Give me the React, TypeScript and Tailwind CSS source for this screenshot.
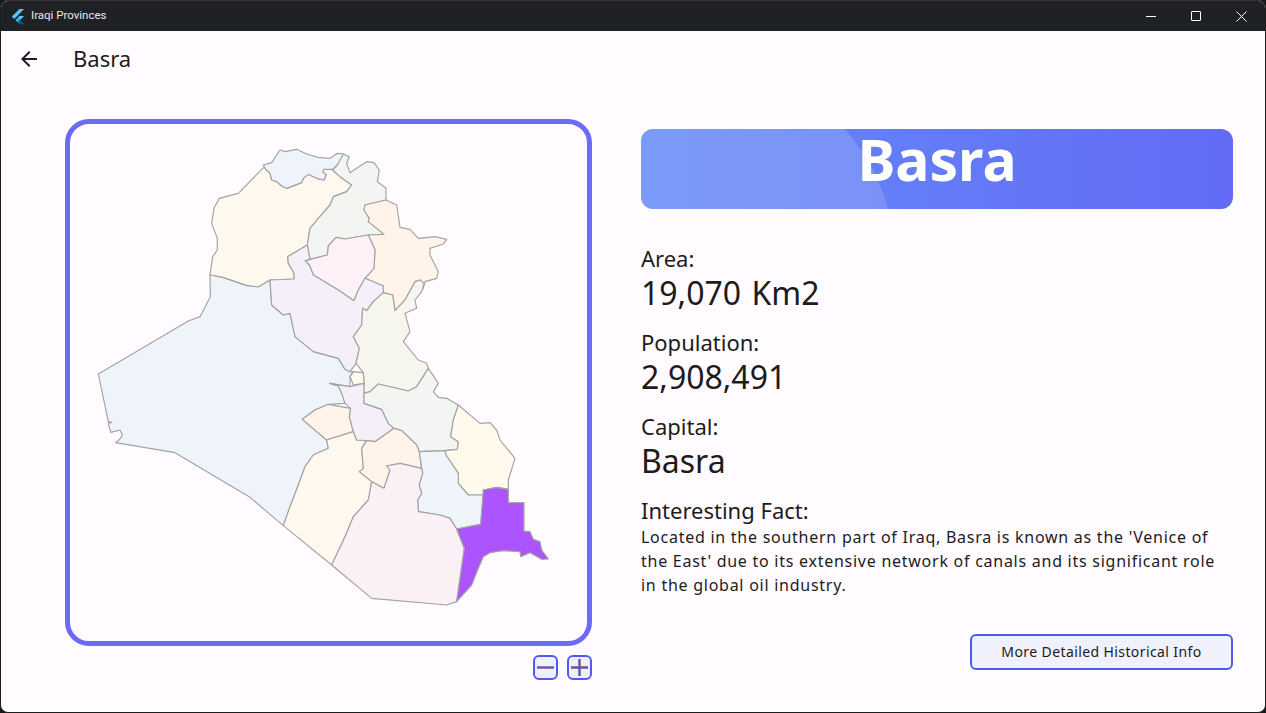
const provincesNorth = [
  // Nineveh
  { fill: "#fff8ee", points: "40,83 -35,160 -92,175 -108,205 -115,250 -98,295 -98,330 -112,350 -120,405 -80,413 -10,437 25,441 60,420 132,417 132,400 115,370 113,350 172,315 180,265 205,235 240,195 250,170 290,155 305,135 270,110 245,88 222,88 218,95 228,105 222,120 200,115 175,103 160,115 155,128 110,145 95,138 80,125 65,120 60,100 45,85" },
  // Anbar
  { fill: "#eff4fb", points: "-120,405 -119,470 -150,530 -185,543 -455,702 -425,845 -415,847 -425,850 -418,877 -390,870 -383,885 -390,897 -403,908 -225,938 0,1072 100,1157 120,1100 145,1035 165,980 190,945 235,925 230,900 157,838 195,810 235,793 285,790 275,760 265,738 240,730 300,740 300,710 310,695 300,695 285,688 265,655 190,635 135,590 120,520 100,525 65,495 60,420 25,441 -10,437 -80,413" },
  // Duhok
  { fill: "#eff4fb", points: "40,75 65,68 90,30 105,35 140,28 170,42 205,52 240,55 262,40 280,42 278,55 262,75 248,88 222,88 218,95 228,105 222,120 200,115 175,103 160,115 155,128 110,145 95,138 80,125 65,120 60,100 45,85" },
  // Erbil
  { fill: "#f2f5f2", points: "248,90 262,75 280,42 298,50 290,70 300,98 320,85 350,65 372,68 388,90 382,125 408,145 408,180 345,195 342,210 358,235 355,245 380,265 402,283 355,285 285,297 258,292 235,318 232,345 180,358 172,315 180,265 205,235 240,195 250,170 290,155 305,135 270,110" },
  // Sulaymaniyah
  { fill: "#fff3ea", points: "408,180 440,195 450,262 480,268 505,295 555,290 590,298 580,312 540,325 540,345 565,395 560,415 525,425 520,445 510,420 495,425 465,480 435,512 428,465 400,458 400,438 345,415 372,385 375,330 355,285 402,283 380,265 355,245 358,235 342,210 345,195" },
  // Kirkuk
  { fill: "#fdf0f7", points: "258,292 285,297 355,285 375,330 372,385 345,415 325,450 312,482 265,450 190,405 178,375 165,362 180,358 232,345 235,318" },
  // Salah ad Din
  { fill: "#f4eff8", points: "172,315 180,358 165,362 178,375 190,405 265,450 312,482 325,450 345,415 400,438 400,458 370,485 350,512 338,505 335,555 310,590 328,625 318,670 300,695 285,688 265,655 190,635 135,590 120,520 100,525 65,495 60,420 132,417 132,400 115,370 113,350" },
  // Diyala
  { fill: "#f6f6ef", points: "400,458 428,465 435,512 465,480 495,425 510,420 522,430 515,455 495,480 500,505 465,520 480,575 460,605 505,660 530,670 535,685 500,740 475,753 385,732 360,755 342,760 342,730 340,698 318,670 328,625 310,590 335,555 338,505 350,512 370,485" },
];

const provincesSouth = [
  // Baghdad
  { fill: "#fff8ee", points: "240,50 250,35 280,38 282,70 250,75" },
  // Karbala
  { fill: "#fff3ea", points: "97,178 135,150 175,133 242,145 238,170 250,215 170,240" },
  // Najaf
  { fill: "#fff8ee", points: "170,240 250,215 260,240 290,242 275,265 280,325 268,335 305,365 295,420 250,470 225,530 185,615 40,497 60,440 85,375 105,320 130,285 175,265" },
  // Babil
  { fill: "#f4eff8", points: "180,70 240,80 282,70 282,100 282,130 335,148 355,190 372,205 315,245 290,242 260,240 250,215 238,170 242,145 225,130 215,100 205,78" },
  // Wasit
  { fill: "#f2f5f2", points: "282,100 300,95 325,72 415,93 440,80 475,25 505,70 490,95 505,112 530,115 565,135 550,180 542,230 565,245 562,268 525,272 448,275 440,255 395,212 372,205 355,190 335,148 282,130" },
  // Maysan
  { fill: "#fffaeb", points: "565,135 630,190 660,188 680,210 690,240 735,295 715,360 715,388 680,382 640,390 640,405 595,405 565,370 565,340 528,285 525,272 562,268 565,245 542,230 550,180" },
  // Qadisiyah
  { fill: "#fff3ea", points: "372,205 395,212 440,255 448,275 455,325 390,310 350,318 360,330 342,385 305,365 268,335 280,325 275,265 290,242 315,245" },
  // Dhi Qar
  { fill: "#eff4fb", points: "448,275 525,272 528,285 565,340 565,370 595,405 640,405 632,493 560,507 540,475 510,465 445,455 443,420 455,400 447,375 458,340 455,325" },
  // Muthanna
  { fill: "#fcf0f7", points: "305,365 342,385 360,330 350,318 390,310 455,325 458,340 447,375 455,400 443,420 445,455 510,465 540,475 560,507 583,565 560,725 530,735 305,715 185,615 225,530 250,470 295,420" },
  // Basra
  { fill: "#ab54ff", points: "640,390 680,382 715,388 715,428 762,428 762,513 780,515 790,538 810,545 815,570 835,597 815,598 780,578 752,590 750,575 700,572 660,578 640,590 625,625 605,675 560,725 583,565 560,507 632,493" },
];

const stats = [
  { label: "Area:", value: "19,070 Km2" },
  { label: "Population:", value: "2,908,491" },
  { label: "Capital:", value: "Basra" },
];

const TitleBar = () => (
  <div className="flex h-[30px] shrink-0 items-center bg-[#202124] text-white">
    <svg viewBox="0 0 166 200" className="ml-[10px] h-[17px] w-[14px]">
      <path d="M37.7 128.9L9.8 101 100.4 10.4h55.5z" fill="#54c5f8" />
      <path d="M156 93.6h-55.6L79.6 114.4l27.8 27.8z" fill="#54c5f8" />
      <path d="M79.6 170l20.8 20.8H156l-48.6-48.6z" fill="#01579b" />
      <path d="M79.6 114.4L51.8 142.2 79.6 170l27.8-27.8z" fill="#29b6f6" />
    </svg>
    <span className="ml-[6px] text-[11.5px] text-[#e8e8e8] [font-family:Roboto,sans-serif]">Iraqi Provinces</span>
    <div className="ml-auto flex items-center">
      <button className="flex h-[30px] w-[45px] items-center justify-center">
        <span className="block h-px w-[10px] bg-white" />
      </button>
      <button className="flex h-[30px] w-[45px] items-center justify-center">
        <span className="block h-[10px] w-[10px] rounded-[1px] border border-white" />
      </button>
      <button className="flex h-[30px] w-[47px] items-center justify-center">
        <svg viewBox="0 0 11 11" className="h-[11px] w-[11px]" stroke="white" strokeWidth="1">
          <path d="M0.5 0.5l10 10M10.5 0.5l-10 10" />
        </svg>
      </button>
    </div>
  </div>
);

const IraqMap = () => (
  <svg viewBox="-600 -708 1551 1551" className="block h-full w-full">
    <g stroke="#a3a3a3" strokeWidth="3.5" strokeLinejoin="round">
      <g transform="translate(-60 -660)">
        {provincesNorth.map((p, i) => (
          <polygon key={i} points={p.points} fill={p.fill} />
        ))}
      </g>
      {provincesSouth.map((p, i) => (
        <polygon key={i} points={p.points} fill={p.fill} />
      ))}
    </g>
  </svg>
);

const ZoomButton = ({ plus }: { plus?: boolean }) => (
  <button className="flex h-[25px] w-[25px] items-center justify-center rounded-[6px] border-2 border-[#4f5bf0] bg-[#eef1fd]">
    <svg viewBox="0 0 19 19" className="h-[19px] w-[19px]" stroke="#6a52a3" strokeWidth="2.4">
      <path d={plus ? "M1 9.5h17M9.5 1v17" : "M1 9.5h17"} />
    </svg>
  </button>
);

export default function App() {
  return (
    <div className="h-[713px] w-[1266px] overflow-hidden bg-[#17181a] [font-family:'Noto_Sans',sans-serif]">
      <div className="flex h-full flex-col overflow-hidden rounded-[8px] border border-t-[#333] border-[#1d1d1f] bg-[#fffbff] text-[#1d1b20]">
        <TitleBar />

        <div className="flex h-[56px] shrink-0 items-center">
          <svg viewBox="0 0 24 24" className="ml-[16px] h-[24px] w-[24px]" fill="#1d1b20">
            <path d="M20 11H7.83l5.59-5.59L12 4l-8 8 8 8 1.41-1.41L7.83 13H20v-2z" />
          </svg>
          <h1 className="mb-[2px] ml-[32px] text-[22px] leading-[28px]">Basra</h1>
        </div>

        <div className="flex flex-1 pl-[64px] pt-[32px]">
          {/* Map and zoom controls */}
          <div className="w-[527px]">
            <div className="h-[527px] rounded-[24px] border-[5px] border-[#6a6cf5]">
              <IraqMap />
            </div>
            <div className="mt-[9px] flex justify-end gap-[9px]">
              <ZoomButton />
              <ZoomButton plus />
            </div>
          </div>

          {/* Province details */}
          <div className="ml-[49px] flex w-[592px] flex-col pt-[10px]">
            <div className="relative h-[80px] rounded-[12px] bg-gradient-to-r from-[#648af8] to-[#636bf6]">
              <div className="absolute inset-0 overflow-hidden rounded-[12px]">
                <div className="absolute -left-[136px] -top-[64px] h-[390px] w-[390px] rounded-full bg-white/15" />
              </div>
              <p className="relative text-center text-[57px] font-bold leading-[60px] text-white">Basra</p>
            </div>

            <div className="mt-[34px] flex flex-col gap-[14px]">
              {stats.map((s) => (
                <div key={s.label}>
                  <p className="text-[22px] leading-[30px]">{s.label}</p>
                  <p className="text-[32px] leading-[40px] [word-spacing:2px]">{s.value}</p>
                </div>
              ))}
            </div>

            <p className="mt-[14px] text-[22px] leading-[30px]">Interesting Fact:</p>
            <p className="max-w-[580px] text-[16px] leading-[24px] tracking-[0.74px]">
              Located in the southern part of Iraq, Basra is known as the 'Venice of the East' due to its extensive
              network of canals and its significant role in the global oil industry.
            </p>

            <button className="ml-auto mt-[37px] h-[36px] w-[263px] rounded-[6px] border-2 border-[#4f5bf0] bg-[#eff1fd] pb-[2px] text-[14px] tracking-[0.4px]">
              More Detailed Historical Info
            </button>
          </div>
        </div>
      </div>
    </div>
  );
}
